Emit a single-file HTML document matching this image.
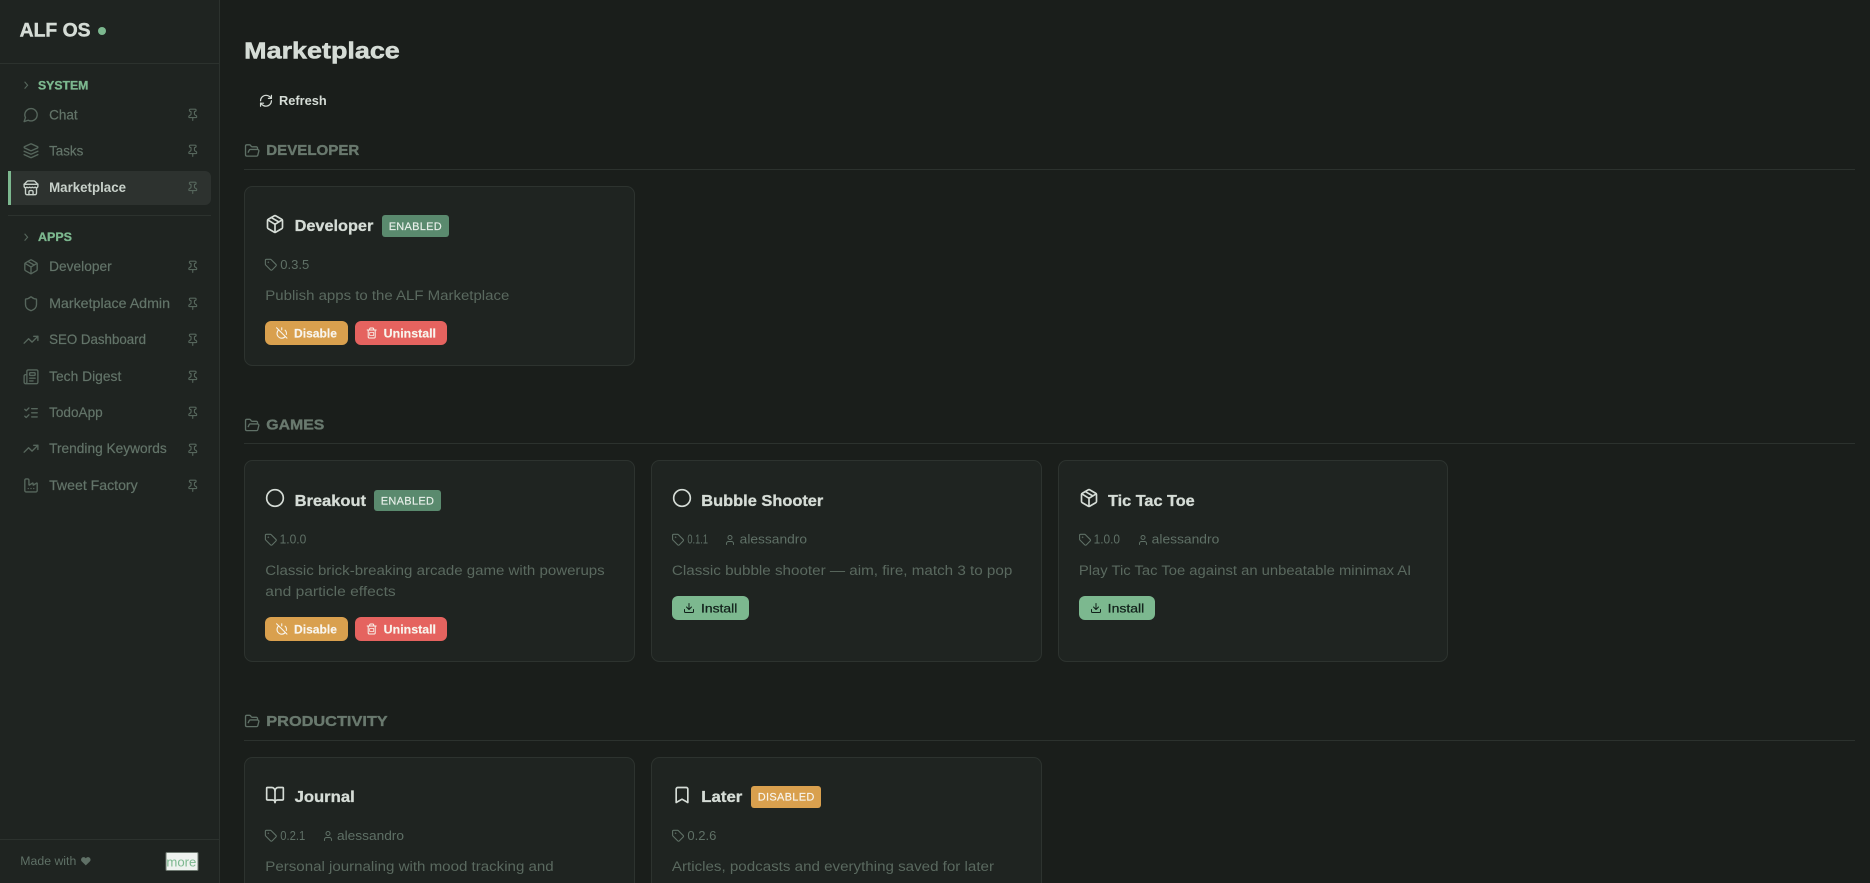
<!DOCTYPE html>
<html lang="en">
<head>
<meta charset="utf-8">
<title>ALF OS Marketplace</title>
<style>
html,body{margin:0;padding:0;width:1870px;height:883px;overflow:hidden;background:#1a1e1b}
svg{display:block}
text{font-family:"Liberation Sans",sans-serif;white-space:pre}
.ic{fill:none;stroke:currentColor;stroke-width:2;stroke-linecap:round;stroke-linejoin:round}
.nav{font-size:14px;fill:#637469;stroke:#637469;stroke-width:.2}
.act{font-size:14px;fill:#c8d1ca;font-weight:700}
.grp{font-size:12px;fill:#7cb88f;font-weight:700;stroke:#7cb88f;stroke-width:.3}
.sec{font-size:15px;fill:#69796e;font-weight:700;stroke:#69796e;stroke-width:.35}
.ttl{font-size:15.5px;fill:#d5dcd6;font-weight:700;stroke:#d5dcd6;stroke-width:.3}
.bdg{font-size:11px;fill:#e9f0ea;stroke:#e9f0ea;stroke-width:.15}
.meta{font-size:12.6px;fill:#5f7066}
.desc{font-size:13.4px;fill:#5a695f}
.btn{font-size:12px;fill:#f8f5ee;font-weight:700;stroke:#f8f5ee;stroke-width:.15}
.ins{font-size:12.4px;fill:#11201a;stroke:#11201a;stroke-width:.25}
.card{fill:#1f2421;stroke:#2d332f;stroke-width:1}
.line{stroke:#2c322e;stroke-width:1}
</style>
</head>
<body>
<svg xmlns="http://www.w3.org/2000/svg" width="1870" height="883" viewBox="0 0 1870 883">
<defs>
<symbol id="chat" viewBox="0 0 24 24"><path class="ic" d="M7.9 20A9 9 0 1 0 4 16.1L2 22Z"/></symbol>
<symbol id="layers" viewBox="0 0 24 24"><g class="ic"><path d="m12.83 2.18a2 2 0 0 0-1.66 0L2.6 6.08a1 1 0 0 0 0 1.83l8.58 3.91a2 2 0 0 0 1.66 0l8.58-3.9a1 1 0 0 0 0-1.83Z"/><path d="m22 17.65-9.17 4.16a2 2 0 0 1-1.66 0L2 17.65"/><path d="m22 12.65-9.17 4.16a2 2 0 0 1-1.66 0L2 12.65"/></g></symbol>
<symbol id="store" viewBox="0 0 24 24"><g class="ic"><path d="m2 7 4.41-4.41A2 2 0 0 1 7.83 2h8.34a2 2 0 0 1 1.42.59L22 7"/><path d="M4 12v8a2 2 0 0 0 2 2h12a2 2 0 0 0 2-2v-8"/><path d="M15 22v-4a2 2 0 0 0-2-2h-2a2 2 0 0 0-2 2v4"/><path d="M2 7h20"/><path d="M22 7v3a2 2 0 0 1-2 2a2.7 2.7 0 0 1-1.59-.63.7.7 0 0 0-.82 0A2.7 2.7 0 0 1 16 12a2.7 2.7 0 0 1-1.59-.63.7.7 0 0 0-.82 0A2.7 2.7 0 0 1 12 12a2.7 2.7 0 0 1-1.59-.63.7.7 0 0 0-.82 0A2.7 2.7 0 0 1 8 12a2.7 2.7 0 0 1-1.59-.63.7.7 0 0 0-.82 0A2.7 2.7 0 0 1 4 12a2 2 0 0 1-2-2V7"/></g></symbol>
<symbol id="pin" viewBox="0 0 24 24"><g class="ic"><path d="M12 17v5"/><path d="M9 10.76a2 2 0 0 1-1.11 1.79l-1.78.9A2 2 0 0 0 5 15.24V16a1 1 0 0 0 1 1h12a1 1 0 0 0 1-1v-.76a2 2 0 0 0-1.11-1.79l-1.78-.9A2 2 0 0 1 15 10.76V7a1 1 0 0 1 1-1 2 2 0 0 0 0-4H8a2 2 0 0 0 0 4 1 1 0 0 1 1 1z"/></g></symbol>
<symbol id="package" viewBox="0 0 24 24"><g class="ic"><path d="M11 21.73a2 2 0 0 0 2 0l7-4A2 2 0 0 0 21 16V8a2 2 0 0 0-1-1.73l-7-4a2 2 0 0 0-2 0l-7 4A2 2 0 0 0 3 8v8a2 2 0 0 0 1 1.73z"/><path d="M12 22V12"/><path d="m3.3 7 7.703 4.734a2 2 0 0 0 1.994 0L20.7 7"/><path d="m7.5 4.27 9 5.15"/></g></symbol>
<symbol id="shield" viewBox="0 0 24 24"><path class="ic" d="M20 13c0 5-3.5 7.5-7.66 8.95a1 1 0 0 1-.67-.01C7.5 20.5 4 18 4 13V6a1 1 0 0 1 1-1c2 0 4.5-1.2 6.24-2.72a1.17 1.17 0 0 1 1.52 0C14.51 3.81 17 5 19 5a1 1 0 0 1 1 1z"/></symbol>
<symbol id="trend" viewBox="0 0 24 24"><g class="ic"><path d="M16 7h6v6"/><path d="m22 7-8.5 8.5-5-5L2 17"/></g></symbol>
<symbol id="news" viewBox="0 0 24 24"><g class="ic"><path d="M15 18h-5"/><path d="M18 14h-8"/><path d="M4 22h16a2 2 0 0 0 2-2V4a2 2 0 0 0-2-2H8a2 2 0 0 0-2 2v16a2 2 0 0 1-4 0v-9a2 2 0 0 1 2-2h2"/><rect x="10" y="6" width="8" height="4" rx="1"/></g></symbol>
<symbol id="todo" viewBox="0 0 24 24"><g class="ic"><path d="m3 17 2 2 4-4"/><path d="m3 7 2 2 4-4"/><path d="M13 6h8"/><path d="M13 12h8"/><path d="M13 18h8"/></g></symbol>
<symbol id="factory" viewBox="0 0 24 24"><g class="ic"><path d="M12 16h.01"/><path d="M16 16h.01"/><path d="M3 19a2 2 0 0 0 2 2h14a2 2 0 0 0 2-2V8.5a.5.5 0 0 0-.769-.422l-4.462 2.844A.5.5 0 0 1 15 10.5v-2a.5.5 0 0 0-.769-.422L9.77 10.922A.5.5 0 0 1 9 10.5V4a2 2 0 0 0-2-2H5a2 2 0 0 0-2 2z"/><path d="M8 16h.01"/></g></symbol>
<symbol id="refresh" viewBox="0 0 24 24"><g class="ic"><path d="M3 12a9 9 0 0 1 9-9 9.75 9.75 0 0 1 6.74 2.74L21 8"/><path d="M21 3v5h-5"/><path d="M21 12a9 9 0 0 1-9 9 9.75 9.75 0 0 1-6.74-2.74L3 16"/><path d="M8 16H3v5"/></g></symbol>
<symbol id="folder" viewBox="0 0 24 24"><path class="ic" d="m6 14 1.5-2.9A2 2 0 0 1 9.24 10H20a2 2 0 0 1 1.94 2.5l-1.54 6a2 2 0 0 1-1.95 1.5H4a2 2 0 0 1-2-2V5a2 2 0 0 1 2-2h3.9a2 2 0 0 1 1.69.9l.81 1.2a2 2 0 0 0 1.67.9H18a2 2 0 0 1 2 2v2"/></symbol>
<symbol id="tag" viewBox="0 0 24 24"><g class="ic"><path d="M12.586 2.586A2 2 0 0 0 11.172 2H4a2 2 0 0 0-2 2v7.172a2 2 0 0 0 .586 1.414l8.704 8.704a2.426 2.426 0 0 0 3.42 0l6.58-6.58a2.426 2.426 0 0 0 0-3.42z"/><circle cx="7.5" cy="7.5" r=".5"/></g></symbol>
<symbol id="user" viewBox="0 0 24 24"><g class="ic"><path d="M19 21v-2a4 4 0 0 0-4-4H9a4 4 0 0 0-4 4v2"/><circle cx="12" cy="7" r="4"/></g></symbol>
<symbol id="download" viewBox="0 0 24 24"><g class="ic"><path d="M21 15v4a2 2 0 0 1-2 2H5a2 2 0 0 1-2-2v-4"/><path d="m7 10 5 5 5-5"/><path d="M12 15V3"/></g></symbol>
<symbol id="trash" viewBox="0 0 24 24"><g class="ic"><path d="M3 6h18"/><path d="M19 6v14c0 1-1 2-2 2H7c-1 0-2-1-2-2V6"/><path d="M8 6V4c0-1 1-2 2-2h4c1 0 2 1 2 2v2"/><path d="M8 11h8v6H8z" stroke-width="1.5"/></g></symbol>
<symbol id="off" viewBox="0 0 24 24"><g class="ic"><path d="M18.36 6.64A9 9 0 0 1 20.77 15"/><path d="M6.16 6.16a9 9 0 1 0 12.68 12.68"/><path d="M12 2v4"/><path d="m2 2 20 20"/></g></symbol>
<symbol id="circle" viewBox="0 0 24 24"><circle class="ic" cx="12" cy="12" r="10"/></symbol>
<symbol id="book" viewBox="0 0 24 24"><g class="ic"><path d="M12 7v14"/><path d="M3 18a1 1 0 0 1-1-1V4a1 1 0 0 1 1-1h5a4 4 0 0 1 4 4 4 4 0 0 1 4-4h5a1 1 0 0 1 1 1v13a1 1 0 0 1-1 1h-6a3 3 0 0 0-3 3 3 3 0 0 0-3-3z"/></g></symbol>
<symbol id="bookmark" viewBox="0 0 24 24"><path class="ic" d="m19 21-7-4-7 4V5a2 2 0 0 1 2-2h10a2 2 0 0 1 2 2v16z"/></symbol>
</defs>

<rect width="1870" height="883" fill="#1a1e1b"/>

<!-- Sidebar -->
<g>
<rect width="219.5" height="883" fill="#1f2421"/>
<path class="line" d="M219.5 0V883M0 63.5H219.5M0 839.5H219.5M8 215.5H211"/>
<text x="19.6" y="36.5" font-size="19.5" font-weight="700" fill="#d5dcd6" stroke="#d5dcd6" stroke-width=".45" textLength="71" lengthAdjust="spacingAndGlyphs">ALF OS</text>
<circle cx="102" cy="31" r="4" fill="#7cb88f"/>

<path d="M24.6 81.8l3 3.4-3 3.4" fill="none" stroke="#56665c" stroke-width="1.1"/>
<text class="grp" x="38" y="89.3" textLength="50.3" lengthAdjust="spacingAndGlyphs">SYSTEM</text>

<g color="#56665c">
<use href="#chat" x="22.75" y="106.5" width="16.5" height="16.5"/>
<use href="#layers" x="22.75" y="142.5" width="16.5" height="16.5"/>
</g>
<text class="nav" x="49.1" y="119.7" textLength="28.6" lengthAdjust="spacingAndGlyphs">Chat</text>
<text class="nav" x="49.1" y="155.3" textLength="34.2" lengthAdjust="spacingAndGlyphs">Tasks</text>

<path d="M8 171H205a6 6 0 0 1 6 6V199a6 6 0 0 1-6 6H8Z" fill="#2d322f"/>
<rect x="8" y="171" width="3" height="34" fill="#7cb88f"/>
<use href="#store" x="22.75" y="179.5" width="16.5" height="16.5" color="#c8d1ca"/>
<text class="act" x="49.1" y="192" textLength="76.9" lengthAdjust="spacingAndGlyphs">Marketplace</text>

<path d="M24.6 233.8l3 3.4-3 3.4" fill="none" stroke="#56665c" stroke-width="1.1"/>
<text class="grp" x="38" y="241" textLength="34" lengthAdjust="spacingAndGlyphs">APPS</text>

<g color="#56665c">
<use href="#package" x="22.75" y="258.5" width="16.5" height="16.5"/>
<use href="#shield" x="22.75" y="295.5" width="16.5" height="16.5"/>
<use href="#trend" x="22.75" y="331.5" width="16.5" height="16.5"/>
<use href="#news" x="22.75" y="368.5" width="16.5" height="16.5"/>
<use href="#todo" x="22.75" y="404.5" width="16.5" height="16.5"/>
<use href="#trend" x="22.75" y="440.5" width="16.5" height="16.5"/>
<use href="#factory" x="22.75" y="477.5" width="16.5" height="16.5"/>
</g>
<text class="nav" x="49.1" y="271" textLength="62.6" lengthAdjust="spacingAndGlyphs">Developer</text>
<text class="nav" x="49.1" y="308" textLength="120.9" lengthAdjust="spacingAndGlyphs">Marketplace Admin</text>
<text class="nav" x="49.1" y="344" textLength="96.9" lengthAdjust="spacingAndGlyphs">SEO Dashboard</text>
<text class="nav" x="49.1" y="381" textLength="72.2" lengthAdjust="spacingAndGlyphs">Tech Digest</text>
<text class="nav" x="49.1" y="417" textLength="53.6" lengthAdjust="spacingAndGlyphs">TodoApp</text>
<text class="nav" x="49.1" y="453" textLength="117.6" lengthAdjust="spacingAndGlyphs">Trending Keywords</text>
<text class="nav" x="49.1" y="490" textLength="88.6" lengthAdjust="spacingAndGlyphs">Tweet Factory</text>

<g color="#56665c">
<use href="#pin" x="186" y="108" width="13.5" height="13.5"/>
<use href="#pin" x="186" y="144" width="13.5" height="13.5"/>
<use href="#pin" x="186" y="181" width="13.5" height="13.5"/>
<use href="#pin" x="186" y="260" width="13.5" height="13.5"/>
<use href="#pin" x="186" y="297" width="13.5" height="13.5"/>
<use href="#pin" x="186" y="333" width="13.5" height="13.5"/>
<use href="#pin" x="186" y="370" width="13.5" height="13.5"/>
<use href="#pin" x="186" y="406" width="13.5" height="13.5"/>
<use href="#pin" x="186" y="443" width="13.5" height="13.5"/>
<use href="#pin" x="186" y="479" width="13.5" height="13.5"/>
</g>

<text x="20.3" y="865.2" font-size="11.5" fill="#5f7066" textLength="56" lengthAdjust="spacingAndGlyphs">Made with</text>
<path d="M85.8 865.4l-4-3.9a2.5 2.5 0 0 1 0-3.6 2.6 2.6 0 0 1 3.6 0l.4.4.4-.4a2.6 2.6 0 0 1 3.6 0 2.5 2.5 0 0 1 0 3.6z" fill="#5f7066"/>
<rect x="166" y="852.5" width="32" height="18" rx="1" fill="#eef2ef" stroke="#6f7a72"/>
<text x="166.4" y="866.3" font-size="13" fill="#7cb88f" textLength="30" lengthAdjust="spacingAndGlyphs">more</text>
</g>

<!-- Header -->
<text x="244.2" y="58.3" font-size="23.5" font-weight="700" fill="#d5dcd6" stroke="#d5dcd6" stroke-width=".55" textLength="155.6" lengthAdjust="spacingAndGlyphs">Marketplace</text>
<use href="#refresh" x="258.75" y="93.5" width="14.5" height="14.5" color="#d5dcd6"/>
<text x="279" y="105" font-size="13" font-weight="700" fill="#d5dcd6" textLength="47.7" lengthAdjust="spacingAndGlyphs">Refresh</text>

<!-- Developer section -->
<use href="#folder" x="244.2" y="142.8" width="16" height="16" color="#5f7066"/>
<text class="sec" x="266.3" y="155" textLength="93" lengthAdjust="spacingAndGlyphs">DEVELOPER</text>
<path class="line" d="M244 169.5H1855"/>

<rect class="card" x="244.5" y="186.5" width="390" height="179" rx="8"/>
<use href="#package" x="265" y="214" width="20" height="20" color="#d5dcd6"/>
<text class="ttl" x="294.6" y="231" textLength="78.7" lengthAdjust="spacingAndGlyphs">Developer</text>
<rect x="382" y="215" width="67" height="22" rx="3" fill="#5a8a6e"/>
<text class="bdg" x="388.7" y="229.8" textLength="53" lengthAdjust="spacing">ENABLED</text>
<use href="#tag" x="264.3" y="258.2" width="13" height="13" color="#5f7066"/>
<text class="meta" x="280.3" y="269" textLength="29" lengthAdjust="spacingAndGlyphs">0.3.5</text>
<text class="desc" x="265.3" y="300" textLength="244" lengthAdjust="spacingAndGlyphs">Publish apps to the ALF Marketplace</text>
<rect x="265" y="321" width="83" height="24" rx="6" fill="#d9a04e"/>
<use href="#off" x="275.5" y="326.7" width="12.5" height="12.5" color="#f8f5ee"/>
<text class="btn" x="294" y="337.3" textLength="43" lengthAdjust="spacingAndGlyphs">Disable</text>
<rect x="355" y="321" width="92" height="24" rx="6" fill="#e5635f"/>
<use href="#trash" x="365.7" y="327" width="12" height="12" color="#f8f5ee"/>
<text class="btn" x="383.7" y="337.3" textLength="52.3" lengthAdjust="spacingAndGlyphs">Uninstall</text>

<!-- Games section -->
<use href="#folder" x="244.2" y="417.3" width="16" height="16" color="#5f7066"/>
<text class="sec" x="266.3" y="429.6" textLength="58" lengthAdjust="spacingAndGlyphs">GAMES</text>
<path class="line" d="M244 443.5H1855"/>

<rect class="card" x="244.5" y="460.5" width="390" height="201" rx="8"/>
<use href="#circle" x="265" y="488" width="20" height="20" color="#d5dcd6"/>
<text class="ttl" x="294.6" y="506" textLength="71.4" lengthAdjust="spacingAndGlyphs">Breakout</text>
<rect x="374" y="490" width="67" height="21" rx="3" fill="#5a8a6e"/>
<text class="bdg" x="380.7" y="504.5" textLength="53.3" lengthAdjust="spacing">ENABLED</text>
<use href="#tag" x="264.3" y="533.2" width="13" height="13" color="#5f7066"/>
<text class="meta" x="279.6" y="543.7" textLength="26.7" lengthAdjust="spacingAndGlyphs">1.0.0</text>
<text class="desc" x="265.3" y="575" textLength="339.4" lengthAdjust="spacingAndGlyphs">Classic brick-breaking arcade game with powerups</text>
<text class="desc" x="265.3" y="596" textLength="130.4" lengthAdjust="spacingAndGlyphs">and particle effects</text>
<rect x="265" y="617" width="83" height="24" rx="6" fill="#d9a04e"/>
<use href="#off" x="275.5" y="622.7" width="12.5" height="12.5" color="#f8f5ee"/>
<text class="btn" x="294" y="633.3" textLength="43" lengthAdjust="spacingAndGlyphs">Disable</text>
<rect x="355" y="617" width="92" height="24" rx="6" fill="#e5635f"/>
<use href="#trash" x="365.7" y="623" width="12" height="12" color="#f8f5ee"/>
<text class="btn" x="383.7" y="633.3" textLength="52.3" lengthAdjust="spacingAndGlyphs">Uninstall</text>

<rect class="card" x="651.5" y="460.5" width="390" height="201" rx="8"/>
<use href="#circle" x="672" y="488" width="20" height="20" color="#d5dcd6"/>
<text class="ttl" x="701.3" y="506" textLength="122" lengthAdjust="spacingAndGlyphs">Bubble Shooter</text>
<use href="#tag" x="671.5" y="533.2" width="13" height="13" color="#5f7066"/>
<text class="meta" x="687.4" y="543.7" textLength="20.6" lengthAdjust="spacingAndGlyphs">0.1.1</text>
<use href="#user" x="724" y="534" width="12" height="12" color="#5f7066"/>
<text class="meta" x="739.7" y="543.7" textLength="67.3" lengthAdjust="spacingAndGlyphs">alessandro</text>
<text class="desc" x="671.9" y="575" textLength="340.4" lengthAdjust="spacingAndGlyphs">Classic bubble shooter — aim, fire, match 3 to pop</text>
<rect x="672" y="596" width="77" height="24" rx="6" fill="#7cb88f"/>
<use href="#download" x="683" y="602" width="12" height="12" color="#11201a"/>
<text class="ins" x="701" y="612.3" textLength="36.3" lengthAdjust="spacingAndGlyphs">Install</text>

<rect class="card" x="1058.5" y="460.5" width="389" height="201" rx="8"/>
<use href="#package" x="1079" y="488" width="20" height="20" color="#d5dcd6"/>
<text class="ttl" x="1108" y="506" textLength="86.7" lengthAdjust="spacingAndGlyphs">Tic Tac Toe</text>
<use href="#tag" x="1078.5" y="533.2" width="13" height="13" color="#5f7066"/>
<text class="meta" x="1093.6" y="543.7" textLength="26.4" lengthAdjust="spacingAndGlyphs">1.0.0</text>
<use href="#user" x="1137" y="534" width="12" height="12" color="#5f7066"/>
<text class="meta" x="1151.7" y="543.7" textLength="67.6" lengthAdjust="spacingAndGlyphs">alessandro</text>
<text class="desc" x="1078.9" y="575" textLength="332.4" lengthAdjust="spacingAndGlyphs">Play Tic Tac Toe against an unbeatable minimax AI</text>
<rect x="1079" y="596" width="76" height="24" rx="6" fill="#7cb88f"/>
<use href="#download" x="1090" y="602" width="12" height="12" color="#11201a"/>
<text class="ins" x="1107.7" y="612.3" textLength="36.6" lengthAdjust="spacingAndGlyphs">Install</text>

<!-- Productivity section -->
<use href="#folder" x="244.2" y="713.3" width="16" height="16" color="#5f7066"/>
<text class="sec" x="266.3" y="726" textLength="121.4" lengthAdjust="spacingAndGlyphs">PRODUCTIVITY</text>
<path class="line" d="M244 740.5H1855"/>

<rect class="card" x="244.5" y="757.5" width="390" height="160" rx="8"/>
<use href="#book" x="265" y="785" width="20" height="20" color="#d5dcd6"/>
<text class="ttl" x="294.6" y="802" textLength="60.1" lengthAdjust="spacingAndGlyphs">Journal</text>
<use href="#tag" x="264.3" y="829.2" width="13" height="13" color="#5f7066"/>
<text class="meta" x="280.3" y="840" textLength="25" lengthAdjust="spacingAndGlyphs">0.2.1</text>
<use href="#user" x="322" y="830" width="12" height="12" color="#5f7066"/>
<text class="meta" x="337" y="840" textLength="67" lengthAdjust="spacingAndGlyphs">alessandro</text>
<text class="desc" x="265.3" y="871" textLength="288.4" lengthAdjust="spacingAndGlyphs">Personal journaling with mood tracking and</text>

<rect class="card" x="651.5" y="757.5" width="390" height="160" rx="8"/>
<use href="#bookmark" x="672" y="785" width="20" height="20" color="#d5dcd6"/>
<text class="ttl" x="701.3" y="802" textLength="41" lengthAdjust="spacingAndGlyphs">Later</text>
<rect x="751" y="786" width="70" height="22" rx="3" fill="#d9a04e"/>
<text class="bdg" x="757.7" y="800.6" textLength="56.6" lengthAdjust="spacing" style="fill:#f8f5ee;stroke:#f8f5ee">DISABLED</text>
<use href="#tag" x="671.5" y="829.2" width="13" height="13" color="#5f7066"/>
<text class="meta" x="687.4" y="840" textLength="29" lengthAdjust="spacingAndGlyphs">0.2.6</text>
<text class="desc" x="671.9" y="871" textLength="322.1" lengthAdjust="spacingAndGlyphs">Articles, podcasts and everything saved for later</text>
</svg>
</body>
</html>
